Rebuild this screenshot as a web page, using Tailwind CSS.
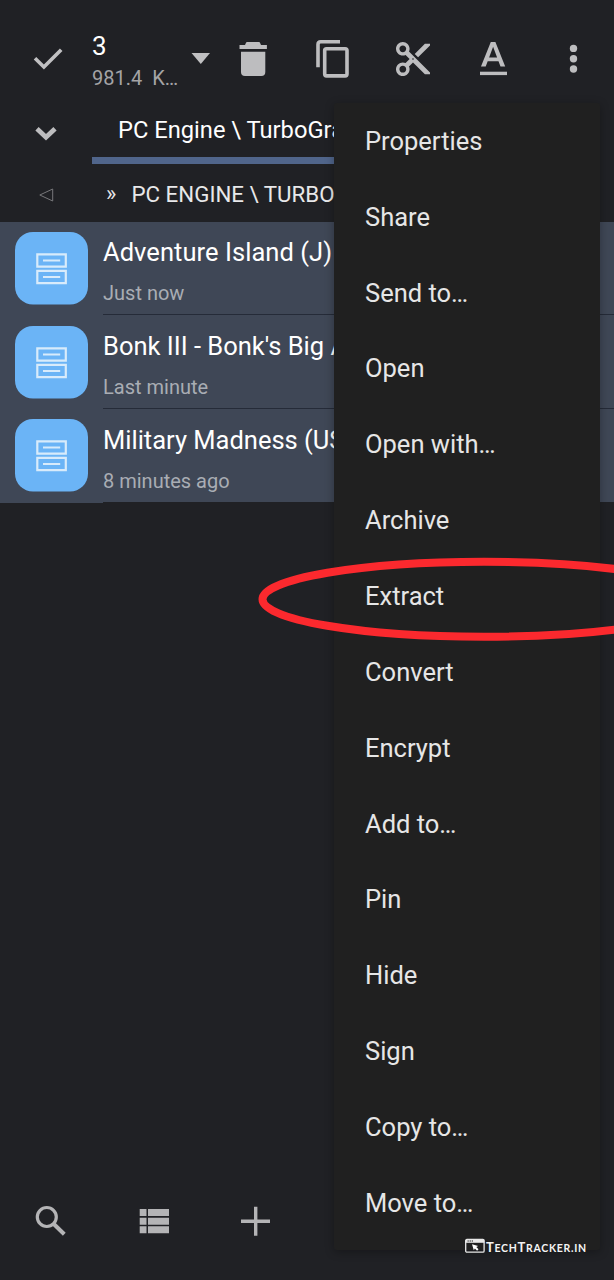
<!DOCTYPE html>
<html lang="en">
<head>
<meta charset="utf-8">
<title>File manager</title>
<script src="https://cdn.jsdelivr.net/npm/@tailwindcss/browser@4"></script>
</head>
<body class="bg-[#202125] overflow-hidden">
<div class="relative w-[614px] h-[1280px] overflow-hidden bg-[#202125] flex flex-col font-['Roboto',sans-serif] text-white whitespace-nowrap">

  <header class="h-[104px] shrink-0 flex">
    <svg class="w-[92px] h-[104px] shrink-0" viewBox="0 0 92 104"><path d="M35 58.3 43.9 67 61.2 49.7" fill="none" stroke="#c0c0c2" stroke-width="3.6"/></svg>
    <div class="w-[92px] shrink-0 pt-[30px]">
      <div class="text-[26px] leading-[32px]">3</div>
      <div class="text-[20px] leading-[32px] text-[#a4a4a6]">981.4&nbsp; K…</div>
    </div>
    <svg class="w-[38px] h-[104px] shrink-0" viewBox="184 0 38 104"><path d="M191.5 53h18.5l-9.2 11z" fill="#c0c0c2"/></svg>
    <svg class="w-[62px] h-[104px] shrink-0" viewBox="222 0 62 104" fill="#bdbdbf"><path d="M239.500 45h5.500l1-2.300q.3-.7 1-.7h12q.8 0 1 .7l1 2.300h5.900v4h-27.400zM241 51.700h24.300v20.300q0 4-4 4h-16.300q-4 0-4-4z"/></svg>
    <svg class="w-[82px] h-[104px] shrink-0" viewBox="284 0 82 104" fill="none" stroke="#bdbdbf" stroke-width="3.600"><path d="M318 67.200V44.500q0-2.700 2.700-2.700H340"/><rect x="324.700" y="48.700" width="22.300" height="27.200" rx="1.800"/></svg>
    <svg class="w-[82px] h-[104px] shrink-0" viewBox="366 0 82 104"><g transform="translate(392.600 38.600) scale(1.7)" fill="#bdbdbf"><path d="M9.640 7.640c.23-.5.360-1.050.360-1.640 0-2.210-1.790-4-4-4S2 3.790 2 6s1.790 4 4 4c.59 0 1.140-.13 1.640-.36L10 12l-2.360 2.360C7.140 14.130 6.590 14 6 14c-2.210 0-4 1.790-4 4s1.790 4 4 4 4-1.790 4-4c0-.59-.13-1.140-.36-1.640L12 14l7 7h3v-1L9.640 7.640zM6 8c-1.100 0-2-.89-2-2s.9-2 2-2 2 .89 2 2-.9 2-2 2zm0 12c-1.100 0-2-.89-2-2s.9-2 2-2 2 .89 2 2-.9 2-2 2zm6-7.500c-.28 0-.5-.22-.5-.5s.22-.5.5-.5.5.22.5.5-.22.5-.5.5zM19 3l-6 6 2 2 7-7V3z"/></g></svg>
    <svg class="w-[84px] h-[104px] shrink-0" viewBox="448 0 84 104" fill="#bdbdbf"><path fill-rule="evenodd" d="M490.800 42h4.600l9.800 24.500h-4.700l-2-5.200h-10.800l-2 5.200h-4.700zM493.100 46.800 489.100 57.600h8z"/><path d="M480 71.700h27v3.400h-27z"/></svg>
    <svg class="w-[82px] h-[104px] shrink-0" viewBox="532 0 82 104" fill="#bdbdbf"><circle cx="573.500" cy="48.400" r="3.700"/><circle cx="573.500" cy="58.700" r="3.700"/><circle cx="573.500" cy="69" r="3.700"/></svg>
  </header>

  <div class="h-[60px] shrink-0 flex">
    <svg class="w-[92px] h-[60px] shrink-0" viewBox="0 104 92 60"><path d="M37 128.700 46 137.300 55 128.700" fill="none" stroke="#bdbdbf" stroke-width="4.700"/></svg>
    <div class="w-[300px] border-b-[7px] border-[#50658b] pl-[26px] h-[60px] text-[23.700px] leading-[52px]">PC Engine \ TurboGrafx</div>
  </div>

  <div class="h-[57.500px] shrink-0 flex">
    <svg class="w-[92px] h-[58px] shrink-0" viewBox="0 164 92 58"><path d="M39.800 195 52.700 189v12z" fill="none" stroke="#77777a"/></svg>
    <div class="pl-[14px] w-[39.500px] text-[22px] leading-[60px] shrink-0 text-[#e8e8ea]">»</div>
    <div class="text-[22.300px] leading-[60px] text-[#e8e8ea]">PC ENGINE \ TURBOGRAFX</div>
  </div>

  <main class="h-[281px] shrink-0 flex flex-col bg-[#3f4756]">
    <div class="h-[93.700px] flex">
      <div class="w-[103px] shrink-0 pl-[15px] pt-[10px]"><svg class="size-[73px]" viewBox="0 0 73 73"><rect width="73" height="72.500" rx="18" fill="#6bb4f6"/><g fill="none" stroke="#d8ebfb" stroke-width="2.200"><path d="M22.300 22.300h28.500v12.300h-28.500zM22.300 38.900h28.500v12.300h-28.500zM28 28.500h17.200M28 45h17.200"/></g></svg></div>
      <div class="flex-1 border-b border-[#252b38]">
        <div class="text-[25.500px] leading-[32px] pt-[14px] tracking-[0.05px]">Adventure Island (J)</div>
        <div class="text-[20px] leading-[24px] pt-[13px] text-[#a9adb4]">Just now</div>
      </div>
    </div>
    <div class="h-[93.700px] flex">
      <div class="w-[103px] shrink-0 pl-[15px] pt-[10.500px]"><svg class="size-[73px]" viewBox="0 0 73 73"><rect width="73" height="72.500" rx="18" fill="#6bb4f6"/><g fill="none" stroke="#d8ebfb" stroke-width="2.200"><path d="M22.300 22.300h28.500v12.300h-28.500zM22.300 38.900h28.500v12.300h-28.500zM28 28.500h17.200M28 45h17.200"/></g></svg></div>
      <div class="flex-1 border-b border-[#252b38]">
        <div class="text-[25.500px] leading-[32px] pt-[15px]">Bonk III - Bonk's Big Adventure</div>
        <div class="text-[20px] leading-[24px] pt-[13px] text-[#a9adb4]">Last minute</div>
      </div>
    </div>
    <div class="flex-1 flex">
      <div class="w-[103px] shrink-0 pl-[15px] pt-[10px]"><svg class="size-[73px]" viewBox="0 0 73 73"><rect width="73" height="72.500" rx="18" fill="#6bb4f6"/><g fill="none" stroke="#d8ebfb" stroke-width="2.200"><path d="M22.300 22.300h28.500v12.300h-28.500zM22.300 38.900h28.500v12.300h-28.500zM28 28.500h17.200M28 45h17.200"/></g></svg></div>
      <div class="flex-1 border-b border-[#202125]">
        <div class="text-[25.500px] leading-[32px] pt-[15px]">Military Madness (USA)</div>
        <div class="text-[20px] leading-[24px] pt-[13px] text-[#a9adb4]">8 minutes ago</div>
      </div>
    </div>
  </main>

  <footer class="mt-auto h-[120px] flex">
    <svg class="w-[102px] h-[120px]" viewBox="0 1160 102 120" fill="none" stroke="#b4b4b6"><circle cx="46.800" cy="1217" r="9.500" stroke-width="3.200"/><path d="M53.500 1223.700 64.300 1234.300" stroke-width="4"/></svg>
    <svg class="w-[102px] h-[120px]" viewBox="102 1160 102 120" fill="#b4b4b6"><path d="M139.700 1209h6.800v7h-6.800zM148 1209h21v7h-21zM139.700 1217.700h6.800v7h-6.800zM148 1217.700h21v7h-21zM139.700 1226.300h6.800v7h-6.800zM148 1226.300h21v7h-21z"/></svg>
    <svg class="w-[102px] h-[120px]" viewBox="204 1160 102 120"><path d="M241 1221.200h29M255.700 1206.700v29" stroke="#b4b4b6" stroke-width="3.400"/></svg>
  </footer>

  <nav class="absolute left-[334px] top-[103px] w-[266px] h-[1147px] bg-[#202020] rounded-[3px] shadow-[0_2px_10px_rgba(0,0,0,0.3)] pl-[31px] text-[25.500px] text-[#e6e6e6]">
    <div class="h-[1138px] grid grid-rows-15 items-center">
      <div>Properties</div>
      <div>Share</div>
      <div>Send to…</div>
      <div>Open</div>
      <div>Open with…</div>
      <div>Archive</div>
      <div>Extract</div>
      <div>Convert</div>
      <div>Encrypt</div>
      <div>Add to…</div>
      <div>Pin</div>
      <div>Hide</div>
      <div>Sign</div>
      <div>Copy to…</div>
      <div>Move to…</div>
    </div>
  </nav>

  <svg class="absolute left-[250px] top-[550px] w-[364px] h-[100px]" viewBox="250 550 364 100"><ellipse cx="484" cy="599.300" rx="221.500" ry="37.500" fill="none" stroke="#fb292e" stroke-width="8"/></svg>

  <div class="absolute left-[464px] top-[1237px] flex items-center h-[18px]">
    <svg class="w-[22px] h-[18px]" viewBox="0 0 22 18"><rect x="1.700" y="2.500" width="18.400" height="12.600" rx="1.200" fill="none" stroke="#e8e8e8" stroke-width="1.300"/><path d="M1.500 4.300h18.800" stroke="#e8e8e8" stroke-width="3"/><path d="M3.500 4h6" stroke="#202020" stroke-width="1.200" stroke-dasharray="1.300 .8"/><path d="M8 7.300 14.200 9l-1.900 1.100 2.200 2.200-1.400 1.400-2.200-2.200-1.100 1.700z" fill="#fff"/></svg>
    <div class="font-['Lato',sans-serif] font-bold text-[13px] leading-[18px] tracking-[0.700px] text-[#f4f4f4] pt-[2px]"><span>T</span><span class="text-[10.500px]">ECH</span><span>T</span><span class="text-[10.500px]">RACKER.IN</span></div>
  </div>
</div>
</body>
</html>
